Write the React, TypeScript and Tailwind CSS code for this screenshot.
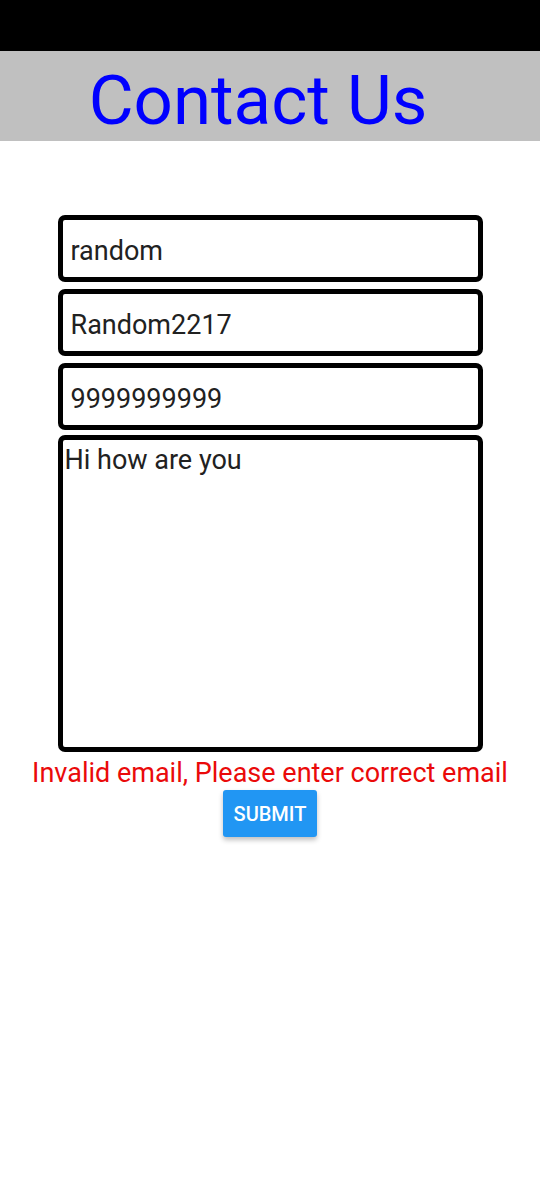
import React from "react";

export default function App() {
  return (
    <div className="w-[540px] h-[1200px] bg-white font-['Roboto',_'Liberation_Sans',_sans-serif]">
      <div className="h-[51px] bg-black" />
      <div className="h-[90px] bg-[#c0c0c0] flex items-center justify-center pr-[24px] pt-[9px]">
        <h1 className="text-[69px] leading-none text-[#0000ff] font-normal">Contact Us</h1>
      </div>
      <div className="flex flex-col items-center pt-[74px]">
        <input
          readOnly
          value="random"
          className="w-[425px] h-[67px] border-[5px] border-black rounded-[7px] px-[8px] pt-[4px] text-[27px] text-[#212121] outline-none bg-white"
        />
        <input
          readOnly
          value="Random2217"
          className="mt-[7px] w-[425px] h-[67px] border-[5px] border-black rounded-[7px] px-[8px] pt-[4px] text-[27px] text-[#212121] outline-none bg-white"
        />
        <input
          readOnly
          value="9999999999"
          className="mt-[7px] w-[425px] h-[67px] border-[5px] border-black rounded-[7px] px-[8px] pt-[4px] text-[27px] text-[#212121] outline-none bg-white"
        />
        <textarea
          readOnly
          value="Hi how are you"
          className="mt-[5px] w-[425px] h-[317px] border-[5px] border-black rounded-[7px] pl-[2px] pt-[5px] text-[27px] leading-[30px] text-[#212121] outline-none resize-none bg-white"
        />
        <p className="mt-[6px] text-[27px] leading-[30px] text-[#ea0a0a] whitespace-nowrap">
          Invalid email, Please enter correct email
        </p>
        <button className="mt-[2px] w-[94px] h-[47px] rounded-[3px] bg-[#2196f3] text-white text-[20px] font-medium shadow-[0_3px_5px_rgba(0,0,0,0.25)]">
          SUBMIT
        </button>
      </div>
    </div>
  );
}
